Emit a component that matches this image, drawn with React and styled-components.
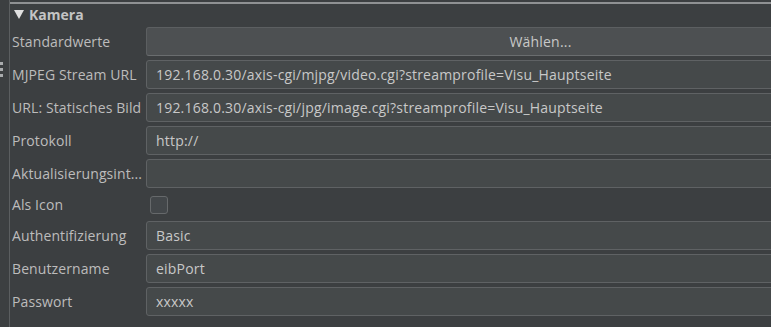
import React from 'react'
import styled, { createGlobalStyle } from 'styled-components'

const rows = [
  { label: 'MJPEG Stream URL', value: '192.168.0.30/axis-cgi/mjpg/video.cgi?streamprofile=Visu_Hauptseite' },
  { label: 'URL: Statisches Bild', value: '192.168.0.30/axis-cgi/jpg/image.cgi?streamprofile=Visu_Hauptseite' },
  { label: 'Protokoll', value: 'http://' },
  { label: 'Aktualisierungsint...', value: '' },
]

const rows2 = [
  { label: 'Authentifizierung', value: 'Basic' },
  { label: 'Benutzername', value: 'eibPort' },
  { label: 'Passwort', value: 'xxxxx' },
]

const App = () => {
  return (
    <>
      <GlobalStyle />
      <Page>
        <Handle>
          <Dot />
          <Dot />
          <Dot />
        </Handle>
        <Panel>
          <TopRule />
          <Header>
            <Triangle />
            <HeaderText>Kamera</HeaderText>
          </Header>
          <Rows>
            <Row>
              <Label>Standardwerte</Label>
              <Button>Wählen...</Button>
            </Row>
            {rows.map(r => (
              <Row key={r.label}>
                <Label>{r.label}</Label>
                <Field>{r.value}</Field>
              </Row>
            ))}
            <CheckRow>
              <Label>Als Icon</Label>
              <CheckCell>
                <Checkbox />
              </CheckCell>
            </CheckRow>
            {rows2.map(r => (
              <Row key={r.label}>
                <Label>{r.label}</Label>
                <Field>{r.value}</Field>
              </Row>
            ))}
          </Rows>
        </Panel>
      </Page>
    </>
  )
}

const GlobalStyle = createGlobalStyle`
  html, body {
    margin: 0;
    padding: 0;
    background-color: #3c3f41;
    overflow: hidden;
  }
  body {
    font-family: 'Open Sans', 'Noto Sans', sans-serif;
  }
`

const Page = styled.div`
  display: flex;
  width: 771px;
  height: 327px;
  overflow: hidden;
  background-color: #3c3f41;
`

const Handle = styled.div`
  width: 9px;
  flex-shrink: 0;
  display: flex;
  flex-direction: column;
  gap: 3px;
  padding-top: 62px;
  box-sizing: border-box;
`

const Dot = styled.div`
  width: 3px;
  height: 3px;
  background-color: #a9abad;
`

const Panel = styled.div`
  flex-shrink: 0;
  width: 925px;
  border-left: 1px solid #5b5e60;
  display: flex;
  flex-direction: column;
  padding-top: 2px;
`

const TopRule = styled.div`
  height: 2px;
  background-color: #8f9193;
`

const Header = styled.div`
  height: 20px;
  margin-bottom: 3px;
  display: flex;
  align-items: center;
  padding-left: 4px;
  gap: 5px;
`

const Triangle = styled.div`
  width: 0;
  height: 0;
  border-left: 5px solid transparent;
  border-right: 5px solid transparent;
  border-top: 9px solid #e0e0e0;
`

const HeaderText = styled.span`
  font-size: 14px;
  font-weight: 700;
  color: #c4c4c4;
`

const Rows = styled.div`
  display: flex;
  flex-direction: column;
  gap: 4px;
`

const Row = styled.div`
  display: grid;
  grid-template-columns: 134px 1fr;
  height: 29px;
  align-items: center;
  padding-left: 2px;
`

const CheckRow = styled(Row)`
  height: 25px;
`

const Label = styled.div`
  font-size: 14px;
  letter-spacing: 0.1px;
  color: #bcbcbc;
  white-space: nowrap;
`

const Field = styled.div`
  height: 29px;
  box-sizing: border-box;
  border: 1px solid #5f6264;
  border-radius: 3px;
  background-color: #45494a;
  color: #c8c8c8;
  font-size: 14px;
  letter-spacing: 0.2px;
  display: flex;
  align-items: center;
  padding-left: 9px;
  white-space: nowrap;
`

const Button = styled(Field)`
  background-color: #4d5052;
  border-color: #5c5f61;
  border-bottom-color: #6a6d6f;
  justify-content: center;
  padding-left: 0;
`

const CheckCell = styled.div`
  display: flex;
  align-items: center;
  padding-left: 4px;
`

const Checkbox = styled.div`
  width: 18px;
  height: 18px;
  box-sizing: border-box;
  border: 1px solid #66696b;
  border-radius: 3px;
  background-color: #43474a;
`

export default App
